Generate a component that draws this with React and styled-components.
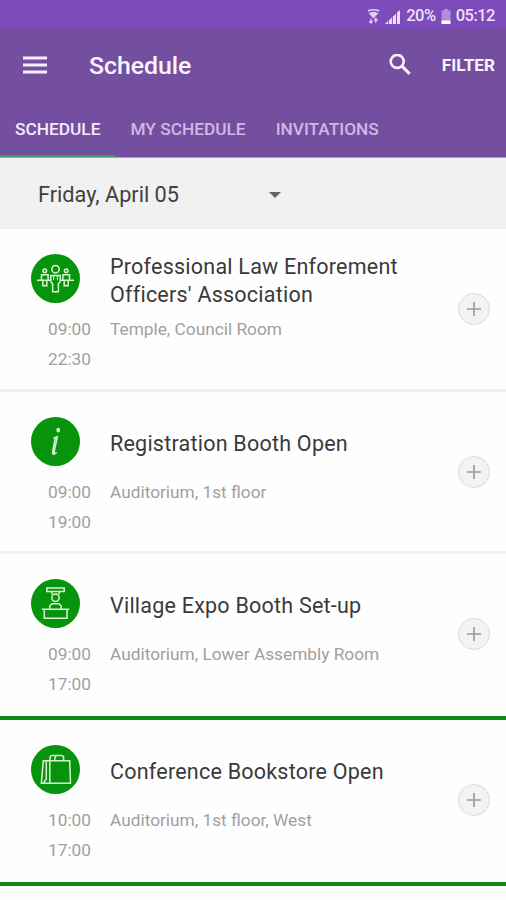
import styled, { createGlobalStyle } from "styled-components";

const events = [
  {
    title: ["Professional Law Enforement", "Officers' Association"],
    place: "Temple, Council Room",
    start: "09:00",
    end: "22:30",
    icon: PeopleIcon,
  },
  {
    title: ["Registration Booth Open"],
    place: "Auditorium, 1st floor",
    start: "09:00",
    end: "19:00",
    icon: InfoIcon,
  },
  {
    title: ["Village Expo Booth Set-up"],
    place: "Auditorium, Lower Assembly Room",
    start: "09:00",
    end: "17:00",
    icon: BoothIcon,
    marked: true,
  },
  {
    title: ["Conference Bookstore Open"],
    place: "Auditorium, 1st floor, West",
    start: "10:00",
    end: "17:00",
    icon: BagIcon,
    marked: true,
  },
];

export default function App() {
  return (
    <>
      <GlobalStyle />
      <Screen>
        <StatusBar>
          <WifiIcon />
          <SignalIcon />
          <span>20%</span>
          <BatteryIcon />
          <span>05:12</span>
        </StatusBar>
        <Header>
          <Toolbar>
            <IconButton aria-label="Menu">
              <MenuIcon />
            </IconButton>
            <h1>Schedule</h1>
            <IconButton aria-label="Search">
              <SearchIcon />
            </IconButton>
            <FilterButton>FILTER</FilterButton>
          </Toolbar>
          <Tabs>
            <Tab $active>SCHEDULE</Tab>
            <Tab>MY SCHEDULE</Tab>
            <Tab>INVITATIONS</Tab>
          </Tabs>
        </Header>
        <DateSelect>
          <span>Friday, April 05</span>
          <Caret />
        </DateSelect>
        {events.map((event) => (
          <EventRow key={event.title[0]} {...event} />
        ))}
      </Screen>
    </>
  );
}

function EventRow({ title, place, start, end, icon: Icon, marked }) {
  return (
    <StyledRow $marked={marked}>
      <Times>
        <Badge>
          <Icon />
        </Badge>
        <span>{start}</span>
        <span>{end}</span>
      </Times>
      <Details>
        <h2>
          {title.map((line) => (
            <span key={line}>{line}</span>
          ))}
        </h2>
        <p>{place}</p>
      </Details>
      <AddButton aria-label="Add">
        <svg width="16" height="16" viewBox="0 0 16 16">
          <path d="M8 1v14M1 8h14" stroke="#9c9c9c" strokeWidth="1.7" />
        </svg>
      </AddButton>
    </StyledRow>
  );
}

function MenuIcon() {
  return (
    <svg width="24" height="18" viewBox="0 0 24 18">
      <path
        d="M0 2h24M0 9h24M0 16h24"
        stroke="#f7effc"
        strokeWidth="2.8"
      />
    </svg>
  );
}

function SearchIcon() {
  return (
    <svg width="22" height="22" viewBox="0 0 22 22" fill="none" stroke="#f7effc">
      <circle cx="8.2" cy="7.4" r="6.5" strokeWidth="2.6" />
      <path d="M13 12.2l7.6 7.6" strokeWidth="3.2" />
    </svg>
  );
}

function WifiIcon() {
  return (
    <svg width="13" height="15" viewBox="0 0 13 15" fill="none" stroke="#e3d0f4">
      <path d="M.8 2Q6.5-.6 12.2 2" strokeWidth="1.4" />
      <path d="M2.3 4.4Q6.5 2 10.7 4.4L6.5 9z" fill="#e3d0f4" strokeWidth="1" />
      <path d="M4 9.5v4.5M2.3 12l1.7 2 1.7-2M8.8 14V9.5M7.1 11.5l1.7-2 1.7 2" strokeWidth="1.2" />
    </svg>
  );
}

function SignalIcon() {
  return (
    <svg width="16" height="15" viewBox="0 0 16 15" fill="#ecdcf8">
      <path d="M0 15l3-3v3zM3.8 11.4L7 8.6V15H3.8zM7.8 7.8L11 4.8V15H7.8zM12 3.6L15 1v14h-3z" />
    </svg>
  );
}

function BatteryIcon() {
  return (
    <svg width="10" height="15" viewBox="0 0 10 15">
      <path d="M3 0h4v1.5h2.5V12h-9V1.5H3z" fill="#b58edb" />
      <path d="M.5 11.5h9V15h-9z" fill="#fff" />
    </svg>
  );
}

function PeopleIcon() {
  return (
    <Glyph>
      <circle cx="24.5" cy="15.2" r="3.7" />
      <circle cx="13.8" cy="16.8" r="1.8" />
      <circle cx="35.2" cy="16.8" r="1.8" />
      <path d="M6 26.2h37" />
      <path d="M10.5 26.2v-5.4h6.6v5.4M11.8 26.2v5.6h4v-5.6M31.9 26.2v-5.4h6.6v5.4M33.2 26.2v5.6h4v-5.6" />
      <path
        d="M19.8 21.4h9.4v5q0 2.4-1.8 3v8.4h-5.8v-8.4q-1.8-.6-1.8-3z"
        fill="#07930b"
      />
      <path d="M22.6 21.4v4.8M26.4 21.4v4.8" strokeWidth="1" />
    </Glyph>
  );
}

function InfoIcon() {
  return (
    <Glyph>
      <ellipse cx="27.2" cy="13.2" rx="1.1" ry="1.6" fill="#e3f7df" />
      <path d="M22.5 21.2l3.8-1.5-3.2 15.4q-.4 2.5 2.6.2M24.2 21.2l-2.6 13.3q-.4 3 2 3" />
    </Glyph>
  );
}

function BoothIcon() {
  return (
    <Glyph>
      <path d="M15.8 9h17.4v3.4H15.8zM20.8 12.4v3.2M28.2 12.4v3.2" />
      <circle cx="24.5" cy="18.8" r="3.7" />
      <path d="M18.8 30v-2.9l2.2-2.4h7l2.2 2.4V30" />
      <path d="M10.8 30.3h27.4M13.3 30.3v9h22.8v-9" />
    </Glyph>
  );
}

function BagIcon() {
  return (
    <Glyph>
      <path d="M12.3 15.8h26.4l.8 22.4H10.3zM18.8 15.8v22.4M15.3 16v18l-3 4" />
      <path d="M19 15.6v-3.2q.2-2 2.2-2h9q2.2 0 2.4 2v3.2M23.8 15.6v-2.4q.2-2.4 2-2.8" />
    </Glyph>
  );
}

const GlobalStyle = createGlobalStyle`
  * {
    box-sizing: border-box;
  }

  body {
    margin: 0;
    background-color: #fff;
    font-family: Roboto, "Liberation Sans", sans-serif;
  }

  h1,
  h2,
  p {
    margin: 0;
    font-weight: 400;
  }

  button {
    border: 0;
    padding: 0;
    background: none;
    font-family: inherit;
  }

  svg {
    display: block;
  }
`;

const Screen = styled.main`
  width: 506px;
  height: 900px;
  overflow: hidden;
  background-color: #fefefe;
`;

const StatusBar = styled.div`
  display: flex;
  align-items: center;
  justify-content: flex-end;
  gap: 5px;
  height: 29px;
  padding: 3px 11px 0 0;
  background-color: #7e4bba;
  color: #eee0f9;
  font-size: 16.5px;
  font-weight: 500;
  letter-spacing: -0.5px;

  span {
    line-height: 20px;
  }
`;

const Header = styled.header`
  height: 129px;
  background-color: #744f9f;
  border-bottom: 1px solid #b49bcb;
`;

const Toolbar = styled.div`
  display: flex;
  align-items: center;
  height: 71px;
  padding: 0 11px 0 23px;
  color: #f9f3fd;

  h1 {
    flex: 1;
    margin-left: 42px;
    padding-top: 2px;
    font-size: 24.8px;
    font-weight: 500;
  }
`;

const IconButton = styled.button`
  display: flex;
`;

const FilterButton = styled.button`
  margin-left: 31px;
  padding-top: 1px;
  color: #f9f3fd;
  font-size: 17.2px;
  font-weight: 700;
`;

const Tabs = styled.nav`
  display: flex;
  height: 57px;
`;

const Tab = styled.a`
  display: flex;
  align-items: center;
  padding: 3px 15px 0;
  border-bottom: 2px solid ${({ $active }) => ($active ? "#3f9a62" : "transparent")};
  color: ${({ $active }) => ($active ? "#f4eafb" : "#d0b7e5")};
  font-size: 17.3px;
  font-weight: 500;
`;

const DateSelect = styled.div`
  display: flex;
  align-items: center;
  justify-content: space-between;
  height: 71px;
  padding: 2px 225px 0 38px;
  background-color: #f1f1f1;
  color: #404040;
  font-size: 21.7px;
`;

const Caret = styled.i`
  border: 6px solid transparent;
  border-top-color: #666;
  border-bottom: 0;
`;

const StyledRow = styled.article`
  display: flex;
  height: ${({ $marked }) => ($marked ? 166 : 162.5)}px;
  border-bottom: ${({ $marked }) => ($marked ? "4px solid #118a12" : "3px solid #f0f0f0")};
`;

const Times = styled.div`
  display: flex;
  flex-direction: column;
  align-items: flex-end;
  width: 91px;
  padding-top: 25px;
  color: #a0a0a0;
  font-size: 17.3px;
  line-height: 30px;
`;

const Badge = styled.div`
  width: 49px;
  height: 49px;
  margin: 0 11px 11px 0;
  border-radius: 50%;
  background-color: #07930b;
`;

const Glyph = styled.svg.attrs({ viewBox: "0 0 49 49" })`
  width: 49px;
  height: 49px;
  fill: none;
  stroke: #d8f5d2;
  stroke-width: 1.5;
`;

const Details = styled.div`
  flex: 1;
  padding: 24px 0 0 19px;

  h2 {
    display: flex;
    flex-direction: column;
    justify-content: center;
    height: 56px;
    color: #3a3a3a;
    font-size: 21.5px;
    letter-spacing: 0.23px;
    line-height: 28px;
    white-space: nowrap;
  }

  p {
    margin-top: 5px;
    color: #a0a0a0;
    font-size: 17.3px;
    line-height: 30px;
    white-space: nowrap;
  }
`;

const AddButton = styled.button`
  display: flex;
  align-items: center;
  justify-content: center;
  width: 32px;
  height: 32px;
  margin: 64px 16px 0 0;

  && {
    border: 1.5px solid #dcdcdc;
    background-color: #f3f3f3;
  }

  border-radius: 50%;
`;
